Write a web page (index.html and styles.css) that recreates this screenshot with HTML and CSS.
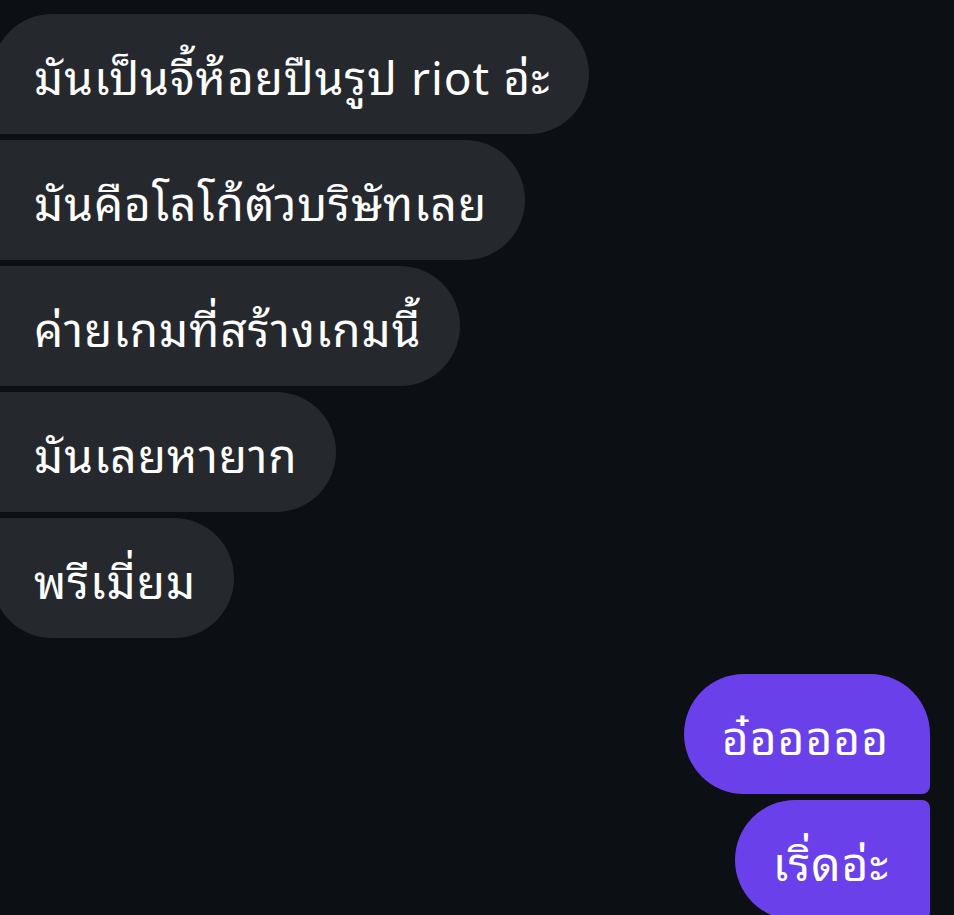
FILE: index.html
```html
<!DOCTYPE html>
<html lang="th">
<head>
<meta charset="utf-8">
<title>Chat</title>
<link rel="stylesheet" href="styles.css">
</head>
<body>
<div class="chat">
  <div class="group in">
    <div class="bubble first">มันเป็นจี้ห้อยปืนรูป riot อ่ะ</div>
    <div class="bubble">มันคือโลโก้ตัวบริษัทเลย</div>
    <div class="bubble">ค่ายเกมที่สร้างเกมนี้</div>
    <div class="bubble">มันเลยหายาก</div>
    <div class="bubble last">พรีเมี่ยม</div>
  </div>
  <div class="group out">
    <div class="bubble first">อ๋อออออ</div>
    <div class="bubble">เริ่ดอ่ะ</div>
  </div>
</div>
</body>
</html>
```

FILE: styles.css
```css
html, body {
  margin: 0;
  padding: 0;
  background: #0c0f14;
  height: 100%;
  overflow: hidden;
}
.chat {
  display: flex;
  flex-direction: column;
  padding-top: 14px;
  gap: 36px;
  font-family: "Noto Sans Thai Looped", "Noto Sans Thai", "Noto Sans", "DejaVu Sans", sans-serif;
  font-size: 46px;
  letter-spacing: 1px;
  color: #ffffff;
}
.group {
  display: flex;
  flex-direction: column;
  gap: 6px;
}
.group.in {
  align-items: flex-start;
  margin-left: -8px;
}
.group.out {
  align-items: flex-end;
  margin-right: 24px;
}
.bubble {
  height: 120px;
  box-sizing: border-box;
  display: flex;
  align-items: center;
  white-space: nowrap;
}
.in .bubble {
  background: #25282d;
  padding: 0 38px 0 42px;
  border-radius: 8px 60px 60px 8px;
}
.in .bubble.first {
  border-top-left-radius: 60px;
}
.in .bubble.last {
  border-bottom-left-radius: 60px;
}
.out .bubble {
  background: #6a40ea;
  padding: 0 41px 0 38px;
  border-radius: 60px 8px 8px 60px;
}
.out .bubble.first {
  border-top-right-radius: 60px;
}
```
